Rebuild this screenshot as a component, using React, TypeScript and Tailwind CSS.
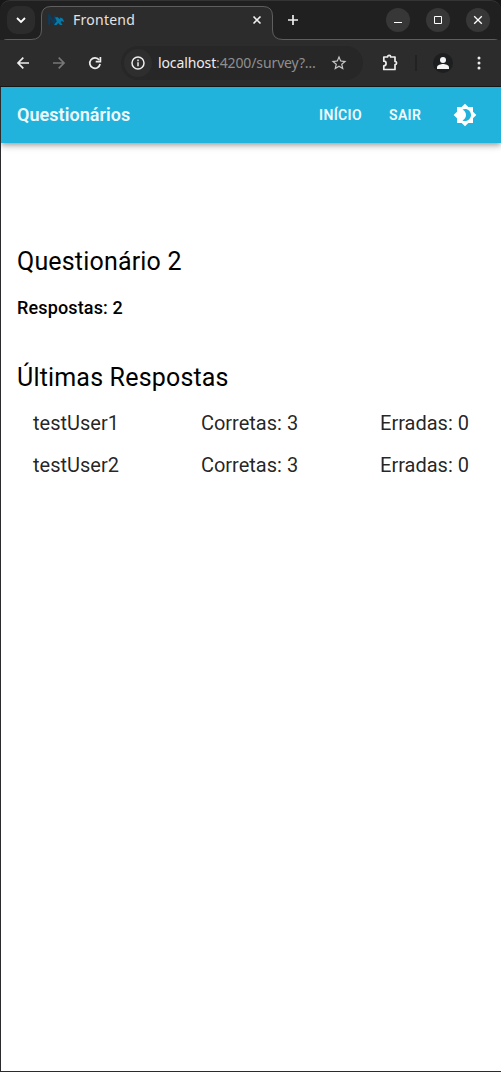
import React from "react";

const rows = [
  { user: "testUser1", right: 3, wrong: 0 },
  { user: "testUser2", right: 3, wrong: 0 },
];

function TabOutline() {
  return (
    <svg className="pointer-events-none absolute inset-0" width="501" height="48" viewBox="0 0 501 48" fill="none">
      <path
        d="M1.5 48V45Q1.5 39.5 7 39.5H31Q41.5 39.5 41.5 30V16Q41.5 6.500 51 6.500H263Q272.500 6.500 272.500 16V30Q272.500 39.5 283 39.5H494Q500.500 39.5 500.500 46V48Z"
        fill="#2c2c2c"
      />
      <path
        d="M1.5 45Q1.5 39.5 7 39.5H31Q41.5 39.5 41.5 30V16Q41.5 6.500 51 6.500H263Q272.500 6.500 272.500 16V30Q272.500 39.5 283 39.5H494Q500.500 39.5 500.500 46"
        stroke="#5f5f5f"
      />
    </svg>
  );
}

function Favicon() {
  return (
    <svg className="-ml-px" width="17" height="12" viewBox="0 0 17 12" fill="none">
      <path d="M1.200 10.500V2L6.800 10V1.500" stroke="#0b3d63" strokeWidth="2" />
      <path d="M7 3.500L9.500 3l2 2 1-1.500 2.200 1 1.600 3.500-2.700-1-1 1L14.500 11H12l-1.800-2L8.500 11H6l2.800-3.700z" fill="#087aa8" />
    </svg>
  );
}

function WindowButton({ children }: { children: React.ReactNode }) {
  return (
    <div className="flex size-6 items-center justify-center rounded-full bg-[#373737]">
      <svg width="24" height="24" viewBox="0 0 24 24" fill="none" stroke="#fff">
        {children}
      </svg>
    </div>
  );
}

function TabStrip() {
  return (
    <div className="relative h-10 shrink-0 rounded-t-[10px] border-t border-[#343434] bg-[#202020]">
      <div className="absolute -top-px left-0">
        <TabOutline />
      </div>
      <div className="relative flex h-[38px] items-center pl-[7px] pr-[11px]">
        <div className="flex size-7 items-center justify-center rounded-[10px] bg-[#2c2c2c]">
          <svg width="28" height="28" viewBox="0 0 28 28" fill="none" stroke="#fff" strokeWidth="1.800">
            <path d="M10 12l4 4 4-4" />
          </svg>
        </div>
        <div className="ml-[14px] flex w-[214px] items-center">
          <Favicon />
          <span className="ml-2 w-[178px] whitespace-nowrap font-['Noto_Sans',sans-serif] text-[14px] leading-5 tracking-[0.25px] text-[#e3e3e3]">
            Frontend
          </span>
          <svg width="12" height="12" viewBox="0 0 12 12" fill="none" stroke="#eee" strokeWidth="1.600">
            <path d="M2.500 2.500l7 7M9.500 2.500l-7 7" />
          </svg>
        </div>
        <svg className="ml-[23px]" width="14" height="14" viewBox="0 0 14 14" fill="none" stroke="#eee" strokeWidth="1.700">
          <path d="M7 2v10M2 7h10" />
        </svg>
        <div className="ml-auto flex gap-4">
          <WindowButton>
            <path d="M8 14.500h8" />
          </WindowButton>
          <WindowButton>
            <path d="M8.500 8.500h7v7h-7z" />
          </WindowButton>
          <WindowButton>
            <path d="M8.200 8.200l7.600 7.600M15.800 8.200l-7.600 7.600" strokeWidth="1.300" />
          </WindowButton>
        </div>
      </div>
    </div>
  );
}

function Toolbar() {
  return (
    <div className="relative flex h-[47px] shrink-0 items-center border-b border-[#171717] bg-[#2c2c2c] pl-[13px] pr-[14px]">
      <svg width="20" height="20" viewBox="0 0 20 20" fill="none" stroke="#ededed" strokeWidth="1.700">
        <path d="M16 10H5M10.300 4.700L5 10l5.300 5.300" />
      </svg>
      <svg className="ml-4" width="20" height="20" viewBox="0 0 20 20" fill="none" stroke="#777" strokeWidth="1.700">
        <path d="M4 10h11M9.700 4.700L15 10l-5.300 5.300" />
      </svg>
      <svg className="ml-4" width="20" height="20" viewBox="0 0 20 20" fill="none" stroke="#ededed" strokeWidth="1.700">
        <path d="M14.200 7A5.200 5.200 0 1 0 15.100 11" />
        <path d="M15.400 4v4.700h-4.700" />
      </svg>
      <div className="ml-4 flex h-[34px] w-[242px] items-center rounded-full bg-[#272727] pl-[3px] pr-[14px]">
        <div className="flex size-7 items-center justify-center rounded-full bg-[#2e2e2e]">
          <svg width="16" height="16" viewBox="0 0 16 16" fill="none" stroke="#ededed" strokeWidth="1.500">
            <circle cx="8" cy="8" r="6" />
            <path d="M8 7.300v3.900M8 4.600v1.600" />
          </svg>
        </div>
        <span className="ml-[6px] w-[172px] shrink-0 whitespace-nowrap font-['Noto_Sans',sans-serif] text-[14px] leading-5 tracking-[-0.12px] text-[#8f8f8f]">
          <span className="text-[#ededed]">localhost</span>:4200/survey?…
        </span>
        <svg className="shrink-0" width="18" height="18" viewBox="0 0 24 24" fill="#c7c7c7">
          <path d="m22 9.240-7.190-.62L12 2 9.190 8.630 2 9.240l5.460 4.730L5.820 21 12 17.270 18.180 21l-1.630-7.030zM12 15.400l-3.760 2.270 1-4.280-3.320-2.880 4.380-.38L12 6.100l1.710 4.040 4.380.38-3.320 2.880 1 4.280z" />
        </svg>
      </div>
      <svg className="ml-[17px] mr-[-1px]" width="20" height="20" viewBox="0 0 20 20" fill="none" stroke="#ededed" strokeWidth="1.700" strokeLinejoin="round">
        <path d="M3.800 4h3.700a1.600 1.600 0 0 1 3.200 0H15v4.500a1.600 1.600 0 0 1 0 3.200V16.500H3.800v-3.700a2.300 2.300 0 0 0 0-4.600z" />
      </svg>
      <div className="ml-4 h-4 w-[2px] bg-[#222]" />
      <div className="ml-4 flex size-5 items-center justify-center rounded-full bg-[#1d1e1f]">
        <svg width="20" height="20" viewBox="0 0 20 20" fill="#f5f5f5">
          <circle cx="10" cy="7" r="3" />
          <path d="M4 16v-1.700c0-2.200 4-3.300 6-3.300s6 1.100 6 3.300V16z" />
        </svg>
      </div>
      <svg className="ml-auto" width="16" height="16" viewBox="0 0 16 16" fill="#ededed">
        <circle cx="8" cy="3" r="1.500" />
        <circle cx="8" cy="8" r="1.500" />
        <circle cx="8" cy="13" r="1.500" />
      </svg>
    </div>
  );
}

function AppBar() {
  return (
    <header className="relative flex h-14 shrink-0 items-center bg-[#22b3dc] pl-4 pr-6 text-white shadow-[0_2px_4px_-1px_rgba(0,0,0,.2),0_4px_5px_0_rgba(0,0,0,.14),0_1px_10px_0_rgba(0,0,0,.12)]">
      <span className="text-[18px] font-semibold leading-6 tracking-[0.05px] text-[#f0fbff]">Questionários</span>
      <nav className="ml-auto flex items-center text-[14px] font-semibold leading-5 text-[#f0fbff]">
        <span className="w-[70px] tracking-[0.350px]">INÍCIO</span>
        <span className="w-[64px] tracking-[0.350px]">SAIR</span>
        <svg width="24" height="24" viewBox="0 0 24 24" fill="#fff">
          <path d="M20 15.310L23.310 12 20 8.690V4h-4.690L12 .69 8.690 4H4v4.690L.69 12 4 15.310V20h4.690L12 23.310 15.310 20H20zM12 18c-.89 0-1.740-.2-2.500-.55C11.560 16.500 13 14.420 13 12s-1.440-4.500-3.500-5.450C10.260 6.200 11.110 6 12 6c3.310 0 6 2.690 6 6s-2.690 6-6 6z" />
        </svg>
      </nav>
    </header>
  );
}

export default function App() {
  return (
    <div className="flex h-[1072px] w-[501px] flex-col overflow-hidden bg-[#171717] font-[Roboto,sans-serif]">
      <TabStrip />
      <Toolbar />
      <div className="flex grow flex-col overflow-hidden border-b border-l border-[#2b2b2d] bg-white">
        <AppBar />
        <main className="px-4 pt-[103px] text-black">
          <h1 className="text-[25px] leading-8 tracking-[0.18px]">Questionário 2</h1>
          <h2 className="mt-4 text-[18px] font-medium leading-7 tracking-[0.14px]">Respostas: 2</h2>
          <h1 className="mt-10 text-[25px] leading-8 tracking-[0.18px]">Últimas Respostas</h1>
          <ul className="mt-2 px-4 text-[20px] text-black/87">
            {rows.map((row) => (
              <li key={row.user} className="flex h-[42px] items-center justify-between">
                <span className="w-[86px]">{row.user}</span>
                <span>Corretas: {row.right}</span>
                <span>Erradas: {row.wrong}</span>
              </li>
            ))}
          </ul>
        </main>
      </div>
    </div>
  );
}
